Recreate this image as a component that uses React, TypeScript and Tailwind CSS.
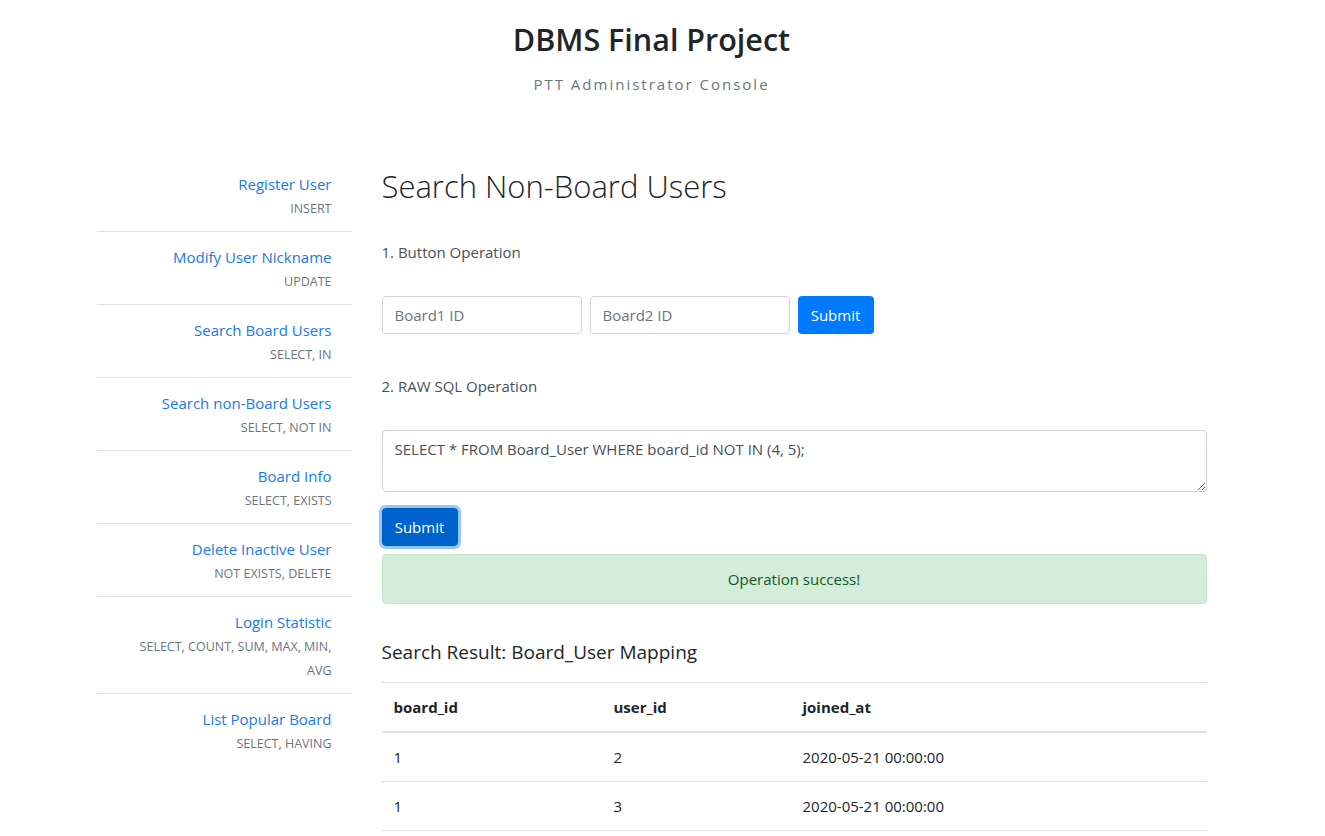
import React from "react";

const navItems = [
  { title: "Register User", tags: "INSERT" },
  { title: "Modify User Nickname", tags: "UPDATE" },
  { title: "Search Board Users", tags: "SELECT, IN" },
  { title: "Search non-Board Users", tags: "SELECT, NOT IN" },
  { title: "Board Info", tags: "SELECT, EXISTS" },
  { title: "Delete Inactive User", tags: "NOT EXISTS, DELETE" },
  { title: "Login Statistic", tags: "SELECT, COUNT, SUM, MAX, MIN, AVG" },
  { title: "List Popular Board", tags: "SELECT, HAVING" },
];

const rows = [
  { board_id: 1, user_id: 2, joined_at: "2020-05-21 00:00:00" },
  { board_id: 1, user_id: 3, joined_at: "2020-05-21 00:00:00" },
];

export default function App() {
  return (
    <div
      className="min-h-screen bg-white text-[#212529]"
      style={{ fontFamily: '"Open Sans", "Noto Sans", Arial, sans-serif' }}
    >
      <div className="mx-auto w-[1110px] -translate-x-[11px]">
        {/* HEADER */}
        <header className="pt-[20px] text-center">
          <h1 className="text-[30.5px] font-semibold leading-[38px]">
            DBMS Final Project
          </h1>
          <p className="mt-[14px] text-[15px] leading-6 tracking-[2px] text-[#6c757d]">
            PTT Administrator Console
          </p>
        </header>

        <div className="mt-[63px] flex gap-[30px]">
          {/* SIDEBAR */}
          <nav className="w-[255px] shrink-0">
            {navItems.map((item) => (
              <div
                key={item.title}
                className="border-b border-[#dee2e6] pt-3 pb-[10px] pr-5 pl-10 text-right last:border-b-0"
              >
                <a className="block text-[15px] leading-[26px] text-[#1a7ae6]" href="#">
                  {item.title}
                </a>
                <div className="text-[12.5px] leading-6 text-[#6c757d]">
                  {item.tags}
                </div>
              </div>
            ))}
          </nav>

          {/* MAIN */}
          <main className="w-[825px]">
            <h2 className="mt-[8px] text-[31px] font-light leading-[38px] text-[#212529]">
              Search Non-Board Users
            </h2>

            <p className="mt-[35px] text-[15px] leading-6 text-[#495057]">
              1. Button Operation
            </p>

            <div className="mt-[32px] flex gap-2">
              <input
                className="h-[38px] w-[200px] rounded border border-[#ced4da] px-3 text-[15px] text-[#495057] placeholder:text-[#6c757d]"
                placeholder="Board1 ID"
              />
              <input
                className="h-[38px] w-[200px] rounded border border-[#ced4da] px-3 text-[15px] text-[#495057] placeholder:text-[#6c757d]"
                placeholder="Board2 ID"
              />
              <button className="h-[38px] w-[76px] rounded bg-[#007bff] text-[15px] text-white">
                Submit
              </button>
            </div>

            <p className="mt-[40px] text-[15px] leading-6 text-[#495057]">
              2. RAW SQL Operation
            </p>

            <textarea
              className="mt-[32px] block h-[62px] w-full rounded border border-[#ced4da] px-3 py-[6px] text-[15px] leading-6 text-[#495057]"
              defaultValue="SELECT * FROM Board_User WHERE board_id NOT IN (4, 5);"
            />

            <button className="mt-4 h-[38px] w-[76px] rounded border border-[#005cbf] bg-[#0062cc] text-[15px] text-white shadow-[0_0_0_3px_rgba(38,143,255,0.5)]">
              Submit
            </button>

            <div className="mt-2 flex h-[50px] items-center justify-center rounded border border-[#c3e6cb] bg-[#d4edda] text-[15px] text-[#155724]">
              Operation success!
            </div>

            <h5 className="mt-[36px] text-[19px] leading-6 text-[#212529]">
              Search Result: Board_User Mapping
            </h5>

            <table className="mt-[18px] w-full border-collapse text-left text-[15px] text-[#212529]">
              <thead>
                <tr className="border-t border-[#dee2e6]">
                  <th className="w-[220px] border-b-2 border-[#dee2e6] px-3 py-3 font-bold leading-6">
                    board_id
                  </th>
                  <th className="w-[189px] border-b-2 border-[#dee2e6] px-3 py-3 font-bold leading-6">
                    user_id
                  </th>
                  <th className="border-b-2 border-[#dee2e6] px-3 py-3 font-bold leading-6">
                    joined_at
                  </th>
                </tr>
              </thead>
              <tbody>
                {rows.map((r, i) => (
                  <tr key={i} className="border-b border-[#dee2e6]">
                    <td className="px-3 py-3 leading-6">{r.board_id}</td>
                    <td className="px-3 py-3 leading-6">{r.user_id}</td>
                    <td className="px-3 py-3 leading-6">{r.joined_at}</td>
                  </tr>
                ))}
              </tbody>
            </table>
          </main>
        </div>
      </div>
    </div>
  );
}
